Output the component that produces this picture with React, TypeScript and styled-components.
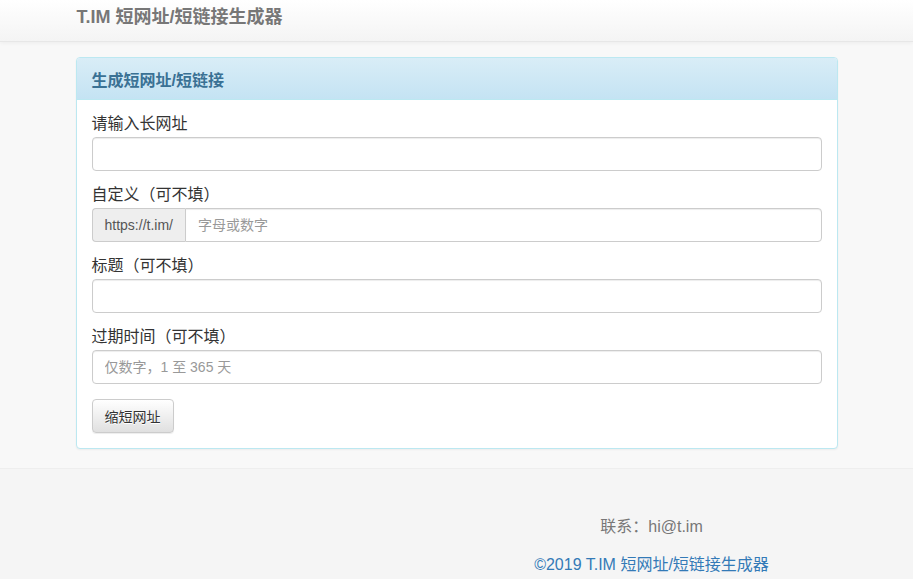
import styled, { createGlobalStyle } from 'styled-components'

const GlobalStyle = createGlobalStyle`
  html, body {
    margin: 0;
    padding: 0;
    background: #f8f8f8;
    font-family: 'Liberation Sans', 'Noto Sans CJK SC', sans-serif;
    color: #333;
  }
  * {
    box-sizing: border-box;
  }
`

const Navbar = styled.header`
  height: 42px;
  background: linear-gradient(to bottom, #ffffff 0%, #f4f4f4 100%);
  border-bottom: 1px solid #e7e7e7;
  box-shadow: 0 1px 4px rgba(0, 0, 0, 0.05);
`

const NavInner = styled.div`
  width: 762px;
  margin: 0 auto;
  padding: 5px 0 0 1px;
`

const Brand = styled.a`
  font-size: 18px;
  font-weight: 700;
  line-height: 24px;
  color: #777;
  text-decoration: none;
  text-shadow: 0 1px 0 rgba(255, 255, 255, 0.25);
`

const Main = styled.main`
  width: 762px;
  margin: 15px auto 0;
  padding-bottom: 19px;
`

const Panel = styled.section`
  background: #fff;
  border: 1px solid #bce8f1;
  border-radius: 4px;
  box-shadow: 0 1px 2px rgba(0, 0, 0, 0.05);
`

const PanelHeading = styled.div`
  height: 42px;
  padding: 0 15px;
  display: flex;
  align-items: center;
  background: linear-gradient(to bottom, #d9edf7 0%, #c4e3f3 100%);
  border-bottom: 1px solid #bce8f1;
  border-radius: 3px 3px 0 0;
`

const PanelTitle = styled.h3`
  margin: 0;
  font-size: 16px;
  font-weight: 700;
  color: #3a7194;
`

const PanelBody = styled.form`
  padding: 15px;
`

const FormGroup = styled.div`
  margin-bottom: 15px;
`

const Label = styled.label`
  display: block;
  font-size: 16px;
  line-height: 18px;
  margin-bottom: 4px;
  color: #333;
`

const Input = styled.input`
  display: block;
  width: 100%;
  height: 34px;
  padding: 6px 12px;
  font-family: inherit;
  font-size: 14px;
  color: #555;
  background: #fff;
  border: 1px solid #ccc;
  border-radius: 4px;
  box-shadow: inset 0 1px 1px rgba(0, 0, 0, 0.075);
  outline: none;

  &::placeholder {
    color: #999;
  }
`

const InputGroup = styled.div`
  display: flex;
  width: 100%;

  ${Input} {
    flex: 1;
    border-radius: 0 4px 4px 0;
  }
`

const Addon = styled.span`
  display: flex;
  align-items: center;
  padding: 0 12px;
  height: 34px;
  font-size: 14px;
  color: #555;
  background: #eee;
  border: 1px solid #ccc;
  border-right: 0;
  border-radius: 4px 0 0 4px;
`

const Button = styled.button`
  height: 34px;
  padding: 0 12px;
  font-family: inherit;
  font-size: 14px;
  color: #333;
  background: linear-gradient(to bottom, #ffffff 0%, #e0e0e0 100%);
  border: 1px solid #ccc;
  border-radius: 4px;
  box-shadow: inset 0 1px 0 rgba(255, 255, 255, 0.15), 0 1px 1px rgba(0, 0, 0, 0.075);
  text-shadow: 0 1px 0 #fff;
  cursor: pointer;
`

const Footer = styled.footer`
  background: #f5f5f5;
  border-top: 1px solid #eee;
  height: 120px;
`

const FooterInner = styled.div`
  width: 762px;
  margin: 0 auto;
  padding: 47px 0 0 390px;
  text-align: center;
  font-size: 16px;
`

const FooterLine = styled.p<{ tone?: 'muted' | 'link' }>`
  margin: 0 0 16px;
  line-height: 22px;
  color: ${(props) => (props.tone === 'link' ? '#337ab7' : '#777')};
`

export default function App() {
  return (
    <>
      <GlobalStyle />
      <Navbar>
        <NavInner>
          <Brand href="#">T.IM 短网址/短链接生成器</Brand>
        </NavInner>
      </Navbar>

      <Main>
        <Panel>
          <PanelHeading>
            <PanelTitle>生成短网址/短链接</PanelTitle>
          </PanelHeading>
          <PanelBody onSubmit={(e) => e.preventDefault()}>
            <FormGroup>
              <Label>请输入长网址</Label>
              <Input type="text" />
            </FormGroup>
            <FormGroup>
              <Label>自定义（可不填）</Label>
              <InputGroup>
                <Addon>https://t.im/</Addon>
                <Input type="text" placeholder="字母或数字" />
              </InputGroup>
            </FormGroup>
            <FormGroup>
              <Label>标题（可不填）</Label>
              <Input type="text" />
            </FormGroup>
            <FormGroup>
              <Label>过期时间（可不填）</Label>
              <Input type="text" placeholder="仅数字，1 至 365 天" />
            </FormGroup>
            <Button type="submit">缩短网址</Button>
          </PanelBody>
        </Panel>
      </Main>

      <Footer>
        <FooterInner>
          <FooterLine tone="muted">联系：hi@t.im</FooterLine>
          <FooterLine tone="link">©2019 T.IM 短网址/短链接生成器</FooterLine>
        </FooterInner>
      </Footer>
    </>
  )
}
